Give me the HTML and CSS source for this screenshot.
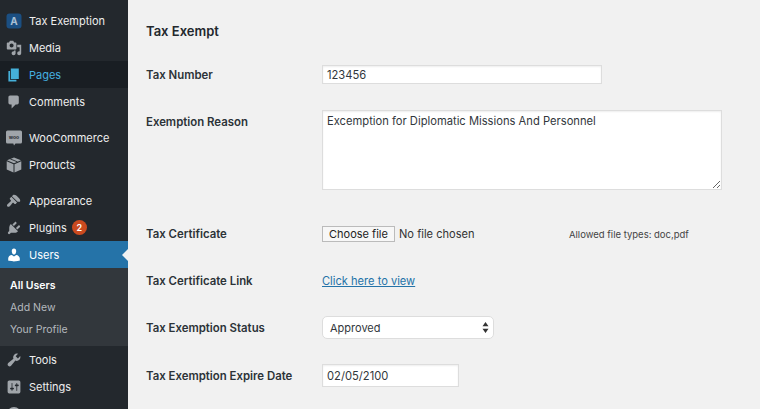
FILE: index.html
```html
<!DOCTYPE html>
<html lang="en">
<head>
<meta charset="utf-8">
<title>Tax Exempt</title>
<link rel="stylesheet" href="styles.css">
</head>
<body>
<div class="shell">
  <nav class="sidebar">
    <ul class="menu">
      <li class="item"><svg class="icon" viewBox="0 0 16 16"><rect width="15" height="15" x=".5" y=".5" rx="3" fill="#1b4f82"/><text class="glyph-a" x="8" y="12" text-anchor="middle">A</text></svg><span>Tax Exemption</span></li>
      <li class="item"><svg class="icon" viewBox="0 0 20 20"><path d="M13 11V4c0-.55-.45-1-1-1h-1.670L9 1H5L3.670 3H2c-.55 0-1 .45-1 1v7c0 .55.45 1 1 1h10c.55 0 1-.45 1-1zM7 4.500c1.380 0 2.500 1.120 2.500 2.500S8.380 9.500 7 9.500 4.500 8.380 4.500 7 5.620 4.500 7 4.500zM14 6h5v10.500c0 1.380-1.120 2.500-2.500 2.500S14 17.880 14 16.500s1.120-2.500 2.500-2.500c.17 0 .34.02.5.050V9h-3V6zm-4 8.050V13h2v3.500c0 1.380-1.120 2.500-2.500 2.500S7 17.880 7 16.500 8.120 14 9.500 14c.17 0 .34.02.5.050z" fill="#a0a5aa" fill-rule="evenodd"/></svg><span>Media</span></li>
      <li class="item dark"><svg class="icon" viewBox="0 0 20 20"><path d="M6 15V2h10v13H6zm-1 1h8v2H3V5h2v11z" fill="#45b0d9"/></svg><span>Pages</span></li>
      <li class="item"><svg class="icon" viewBox="0 0 20 20"><path d="M5 2h9c1.100 0 2 .9 2 2v7c0 1.100-.9 2-2 2h-2l-5 5v-5H5c-1.100 0-2-.9-2-2V4c0-1.100.9-2 2-2z" fill="#a0a5aa"/></svg><span>Comments</span></li>
      <li class="sep"></li>
      <li class="item"><svg class="icon" viewBox="0 0 16 16"><path d="M1.500 .5h13A1.500 1.500 0 0 1 16 2v10a1.500 1.500 0 0 1-1.500 1.500H9.500L8 15.500l-.7-2H1.500A1.500 1.500 0 0 1 0 12V2A1.500 1.500 0 0 1 1.500 .5z" fill="#a0a5aa"/><text class="glyph-woo" x="8" y="9.300" text-anchor="middle">woo</text></svg><span>WooCommerce</span></li>
      <li class="item"><svg class="icon" viewBox="0 0 16 16"><path d="M8 .5l7 2.800L8 6.300 1 3.300zM.7 4.300l6.800 3V15.500L.7 12.500zM15.300 4.300L8.500 7.300V15.500l6.800-3z" fill="#a0a5aa"/><path d="M4.200 1.900l7.300 3" stroke="#23282d" stroke-width=".9"/></svg><span>Products</span></li>
      <li class="sep"></li>
      <li class="item"><svg class="icon" viewBox="0 0 20 20"><path d="M14.480 11.060L7.410 3.990l1.500-1.500c.5-.56 2.300-.47 3.510.320 1.210.8 1.430 1.280 2.410 2.280 1.030.94 1.490 1.410 2.280 2.420.79 1.210.88 3.010.320 3.510zM13.770 11.770L6.700 4.700 4.930 6.470c-.39.39-.39 1.020 0 1.410l1.060 1.060c.39.39.39 1.030 0 1.420-.6.600-1.430 1.150-2.120 1.770-1.730 1.520-3.630 3.130-2.120 4.660 1.530 1.510 3.140-.39 4.660-2.120.62-.69 1.170-1.520 1.770-2.120.39-.39 1.030-.39 1.420 0l1.060 1.060c.39.39 1.020.39 1.410 0z" fill="#a0a5aa"/></svg><span>Appearance</span></li>
      <li class="item"><svg class="icon" viewBox="0 0 20 20"><path d="M13.110 4.360L9.870 7.600 8 5.730l3.240-3.240c.35-.34 1.050-.2 1.560.32.52.51.66 1.210.31 1.550zm-8 1.770l.91-1.120 9.010 9.010-1.190.84c-.71.71-2.630 1.160-3.820 1.160H6.140L4.900 17.260c-.59.59-1.540.59-2.120 0-.59-.58-.59-1.530 0-2.120l1.240-1.240v-3.880c0-1.130.4-3.180 1.090-3.890zm7.260 3.970l3.240-3.240c.34-.35 1.040-.21 1.550.31.52.51.66 1.210.31 1.550l-3.240 3.250z" fill="#a0a5aa"/></svg><span>Plugins</span><span class="badge">2</span></li>
      <li class="item current"><svg class="icon" viewBox="0 0 20 20"><path d="M10 9.250c-2.270 0-2.730-3.440-2.730-3.440C7 4.020 7.820 2 9.970 2c2.160 0 2.980 2.020 2.710 3.810 0 0-.41 3.440-2.680 3.440zm0 2.570L12.720 10c2.390 0 4.520 2.330 4.520 4.530v2.490s-3.650 1.130-7.240 1.130c-3.650 0-7.240-1.130-7.240-1.130v-2.490c0-2.250 1.940-4.480 4.570-4.480z" fill="#fff"/></svg><span>Users</span></li>
      <li class="sub">
        <a class="sublink active">All Users</a>
        <a class="sublink">Add New</a>
        <a class="sublink">Your Profile</a>
      </li>
      <li class="item"><svg class="icon" viewBox="0 0 20 20"><path d="M16.680 9.770c-1.340 1.340-3.300 1.670-4.950.99l-5.410 6.520c-.99.99-2.590.99-3.570 0-.99-.98-.99-2.580 0-3.570l6.520-5.420c-.68-1.650-.35-3.610.99-4.950 1.280-1.280 3.120-1.620 4.720-1.060l-2.890 2.890 2.820 2.820 2.860-2.870c.53 1.580.18 3.390-1.090 4.650z" fill="#a0a5aa"/></svg><span>Tools</span></li>
      <li class="item"><svg class="icon" viewBox="0 0 20 20"><path d="M18 16V4c0-1.100-.9-2-2-2H4c-1.100 0-2 .9-2 2v12c0 1.100.9 2 2 2h12c1.100 0 2-.9 2-2zM8 11h1c.55 0 1 .45 1 1s-.45 1-1 1H8v1.500c0 .280-.22.5-.5.5s-.5-.22-.5-.5V13H6c-.55 0-1-.45-1-1s.45-1 1-1h1V5.500c0-.280.22-.5.5-.5s.5.220.5.5V11zm5-2h-1c-.55 0-1-.45-1-1s.45-1 1-1h1V5.500c0-.280.22-.5.5-.5s.5.220.5.5V7h1c.55 0 1 .45 1 1s-.45 1-1 1h-1v5.500c0 .280-.22.5-.5.5s-.5-.22-.5-.5V9z" fill="#a0a5aa" fill-rule="evenodd"/></svg><span>Settings</span></li>
      <li class="item"><svg class="icon" viewBox="0 0 16 16"><circle cx="8" cy="8" r="7" fill="#a0a5aa"/></svg></li>
    </ul>
  </nav>
  <main class="main">
    <h2 class="title">Tax Exempt</h2>
    <div class="row row-number">
      <label class="label">Tax Number</label>
      <input class="field field-wide" type="text" value="123456">
    </div>
    <div class="row row-reason">
      <label class="label">Exemption Reason</label>
      <textarea class="field area">Excemption for Diplomatic Missions And Personnel</textarea>
    </div>
    <div class="row row-cert">
      <label class="label">Tax Certificate</label>
      <div class="filegroup">
        <span class="filebtn">Choose file</span>
        <span class="filename">No file chosen</span>
      </div>
      <span class="hint">Allowed file types: doc,pdf</span>
    </div>
    <div class="row row-link">
      <label class="label">Tax Certificate Link</label>
      <a class="link" href="#">Click here to view</a>
    </div>
    <div class="row row-status">
      <label class="label">Tax Exemption Status</label>
      <div class="select">
        <span>Approved</span>
        <svg class="updown" viewBox="0 0 7 11"><path d="M3.500 0L6.500 4.300H.5zM3.500 11L.5 6.700h6z" fill="#333"/></svg>
      </div>
    </div>
    <div class="row row-date">
      <label class="label">Tax Exemption Expire Date</label>
      <input class="field field-date" type="text" value="02/05/2100">
    </div>
  </main>
</div>
</body>
</html>
```

FILE: styles.css
```css
* { box-sizing: border-box; }
html, body { margin: 0; height: 100%; overflow: hidden; }
body { font-family: Inter, "Liberation Sans", sans-serif; font-size: 11px; color: #32373c; background: #f1f1f1; }
.shell { display: flex; height: 409px; overflow: hidden; }

.sidebar { width: 128px; flex: none; background: #23282d; padding-top: 7px; overflow: hidden; }
.menu { list-style: none; margin: 0; padding: 0; }
.item { position: relative; display: flex; align-items: center; height: 27px; padding-left: 6px; gap: 7px; color: #eee; font-size: 11px; }
.icon { width: 16px; height: 16px; flex: none; }
.glyph-a { font: 700 10px Inter, "Liberation Sans", sans-serif; fill: #a9bfd3; }
.glyph-woo { font: 600 5px "Liberation Sans", sans-serif; fill: #23282d; }
.dark { background: #191e23; color: #45b0e0; }
.current { background: #2573a8; color: #fff; }
.current::after { content: ""; position: absolute; right: 0; top: 8px; border: 6px solid transparent; border-left-width: 0; border-right-color: #f1f1f1; }
.sep { height: 9px; }
.badge { display: flex; align-items: center; justify-content: center; width: 15px; height: 15px; margin-left: -2px; border-radius: 50%; background: #ca4a1f; color: #fff; font-size: 9px; font-weight: 600; }
.sub { display: flex; flex-direction: column; height: 78px; padding-top: 7px; background: #32373c; }
.sublink { height: 22px; line-height: 22px; padding-left: 10px; font-size: 10.500px; color: #b4b9be; }
.active { color: #fff; font-weight: 600; }

.main { flex: 1; padding: 0 0 0 18px; min-width: 0; }
.title { margin: 23px 0 0; height: 16px; font-size: 13px; line-height: 16px; font-weight: 600; color: #23282d; }
.row { display: flex; }
.label { flex: none; width: 176px; font-size: 11.400px; font-weight: 600; color: #2c3338; }
.row-number { margin-top: 26px; align-items: center; }
.row-reason { margin-top: 26px; }
.row-reason .label { margin-top: 5px; }
.row-cert { margin-top: 36px; align-items: center; }
.row-link { margin-top: 32px; align-items: center; }
.row-status { margin-top: 28px; align-items: center; }
.row-date { margin-top: 25px; align-items: center; }

.field { display: block; border: 1px solid #ddd; background: #fff; color: #32373c; font: 11.200px Inter, "Liberation Sans", sans-serif; padding: 0 4px; outline: 0; margin: 0; box-shadow: inset 0 1px 2px rgba(0,0,0,.07); }
.field-wide { width: 280px; height: 19px; }
.area { width: 400px; height: 80px; padding: 3px 4px; resize: vertical; }
.field-date { width: 137px; height: 23px; }

.filegroup { display: flex; align-items: center; width: 247px; }
.filebtn { width: 73px; height: 16px; line-height: 14px; text-align: center; border: 1px solid #bbb; background: #f7f7f7; color: #222; font-size: 11px; }
.filename { margin-left: 4px; font-size: 11.100px; color: #333; }
.hint { font-size: 9.500px; color: #444; }
.link { font-size: 11.100px; color: #2573a8; }
.select { display: flex; align-items: center; justify-content: space-between; width: 172px; height: 23px; padding: 0 4px 0 7px; background: #fff; border: 1px solid #ddd; border-radius: 5px; color: #32373c; font-size: 11px; }
.updown { width: 7px; height: 11px; }
```
